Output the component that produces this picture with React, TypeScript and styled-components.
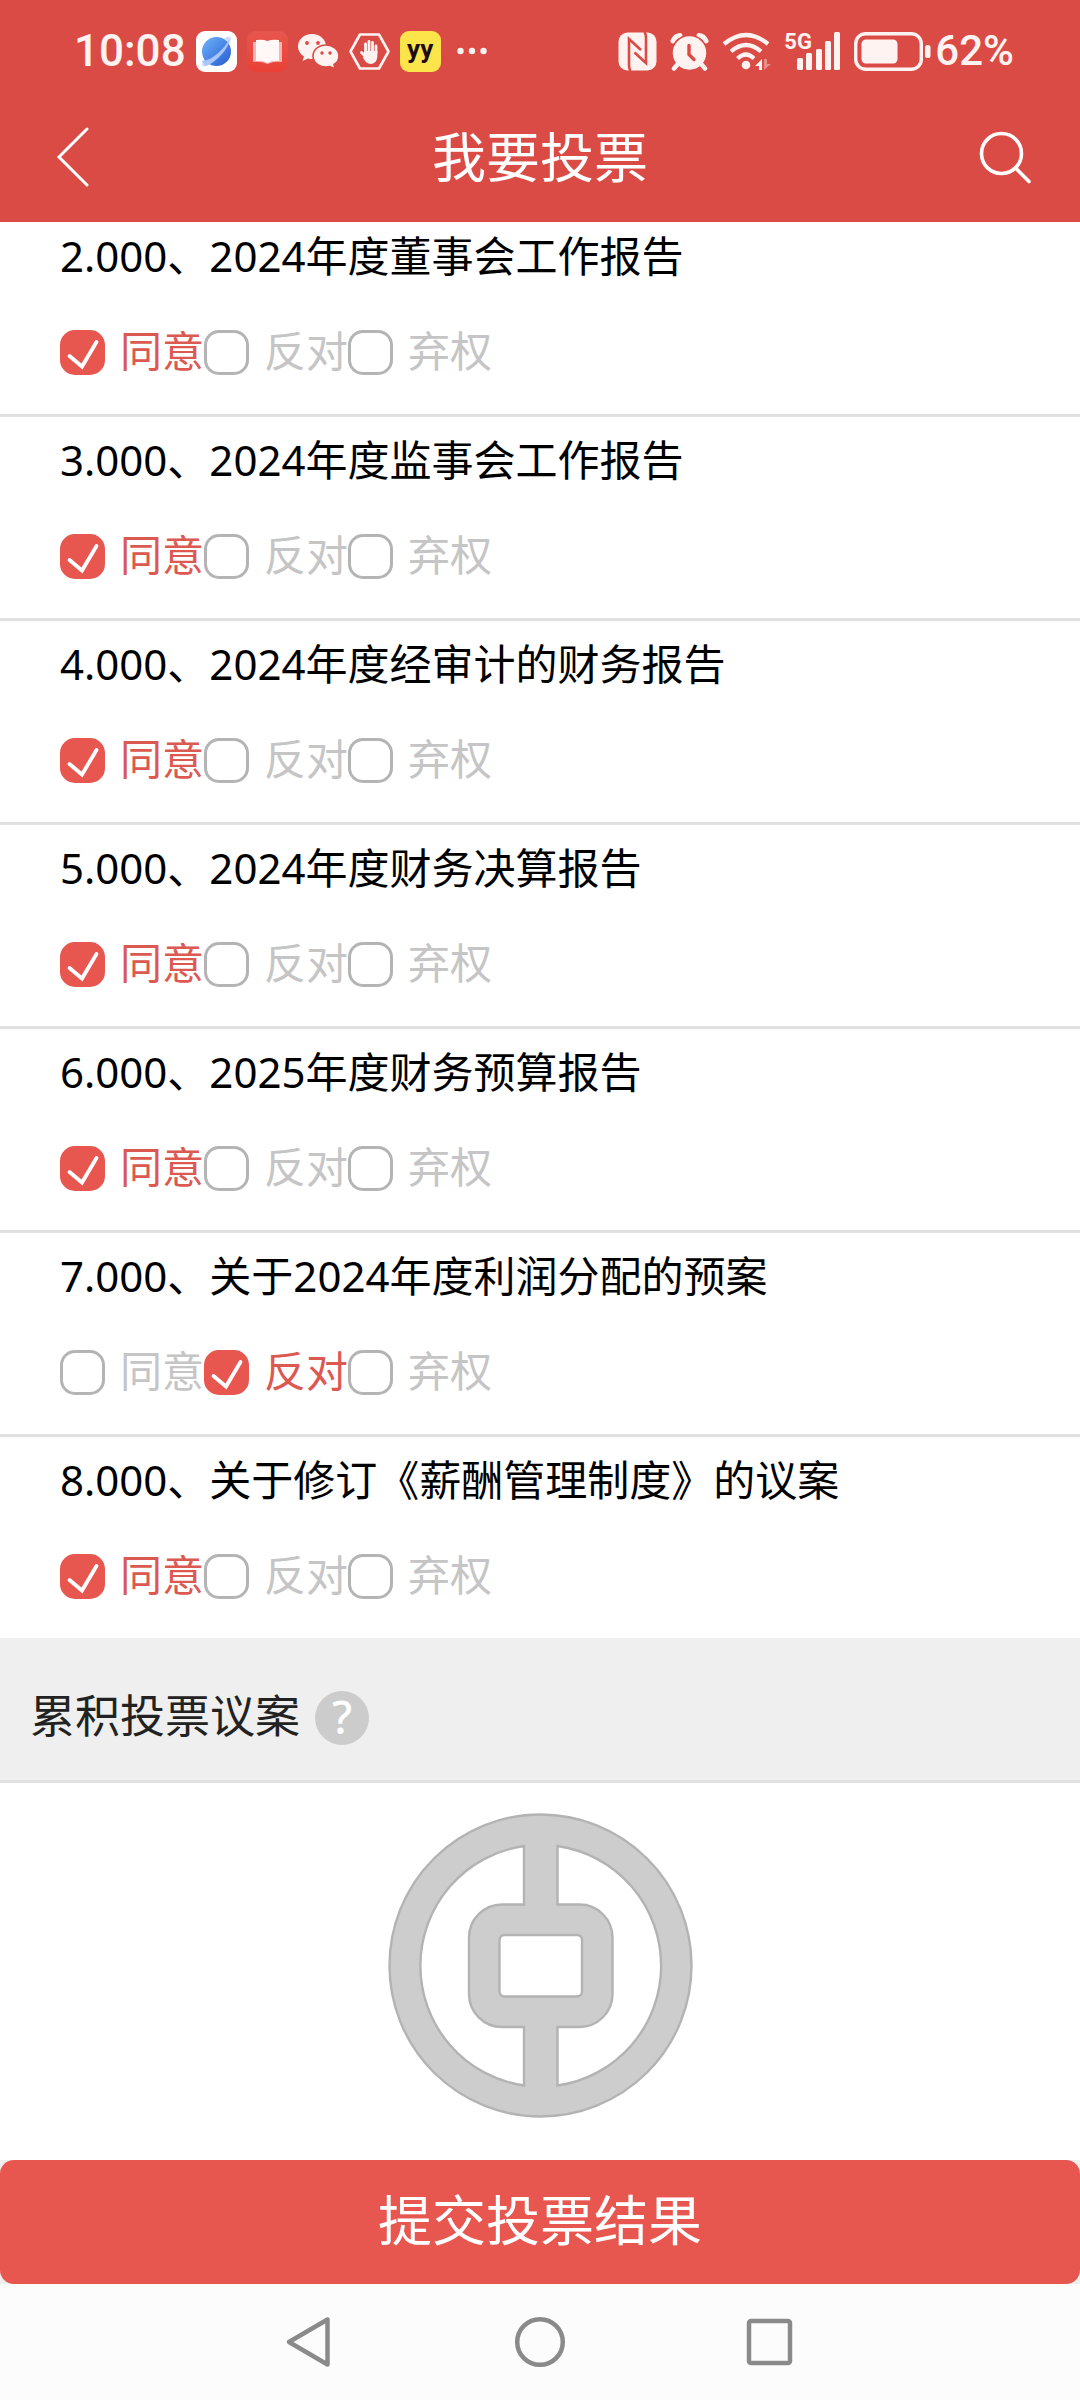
import React, { useState } from "react";
import styled, { createGlobalStyle } from "styled-components";

const GlobalStyle = createGlobalStyle`
  * { box-sizing: border-box; }
  body {
    margin: 0;
    background: #fff;
    font-family: "Noto Sans", "Noto Sans CJK SC", sans-serif;
  }
  button, input { font: inherit; margin: 0; padding: 0; border: 0; }
  button { background: none; cursor: pointer; }
  svg { display: block; flex: none; }
`;

const Page = styled.div`
  display: flex;
  flex-direction: column;
  min-height: 100vh;
  background: #fff;
`;

const Header = styled.header`
  background: #da4b45;
  color: #fff;
`;

const StatusBar = styled.div`
  display: flex;
  justify-content: space-between;
  align-items: center;
  height: 102px;
  padding: 0 66px 0 74px;
  color: #fff3f2;
  font-family: Roboto, "Noto Sans CJK SC", sans-serif;
`;

const StatusGroup = styled.div<{ $gap: number }>`
  display: flex;
  align-items: center;
  gap: ${(p) => p.$gap}px;
`;

const StatusText = styled.span<{ $size: number }>`
  font-size: ${(p) => p.$size}px;
  line-height: 52px;
  font-weight: 500;
`;

const AppBadge = styled.span`
  display: flex;
  align-items: center;
  justify-content: center;
  width: 41px;
  height: 41px;
  border-radius: 9px;
  background: #fce54b;
  color: #1d0d12;
  font-size: 26px;
  line-height: 28px;
  font-weight: 700;
  padding-bottom: 4px;
`;

const Signal = styled.span`
  position: relative;
  display: block;
`;

const SignalLabel = styled.span`
  position: absolute;
  left: 0;
  top: 0;
  font-size: 22px;
  line-height: 20px;
  font-weight: 700;
`;

const TitleBar = styled.div`
  display: grid;
  grid-template-columns: 60px 1fr 60px;
  align-items: center;
  height: 120px;
  padding: 0 44px 10px;
`;

const IconButton = styled.button`
  display: flex;
  align-items: center;
  justify-content: center;
  width: 60px;
  height: 60px;
  color: #fff;
`;

const Title = styled.h1`
  margin: 0;
  text-align: center;
  font-size: 54px;
  line-height: 72px;
  font-weight: 400;
`;

const Proposals = styled.main`
  display: flex;
  flex-direction: column;
`;

const Proposal = styled.fieldset`
  margin: 0;
  min-width: 0;
  border: 0;
  padding: 13px 60px 33px;
  border-bottom: 3px solid #e1e1e1;
  &:first-child { padding-top: 4px; }
  &:last-child { border-bottom: 0; }
`;

const ProposalTitle = styled.legend`
  float: left;
  width: 100%;
  padding: 0;
  color: #000;
  font-size: 42px;
  line-height: 60px;
`;

const Options = styled.div`
  clear: both;
  display: flex;
  padding-top: 38px;
`;

const Option = styled.label<{ $on: boolean }>`
  display: flex;
  align-items: center;
  gap: 15px;
  height: 57px;
  color: ${(p) => (p.$on ? "#dc5952" : "#c5c5c5")};
  font-size: 42px;
  line-height: 53px;
  cursor: pointer;
`;

const OptionText = styled.span`
  padding-bottom: 4px;
`;

const TickBox = styled.span`
  display: grid;
  width: 45px;
  height: 45px;
  > * { grid-area: 1 / 1; }
  > svg { pointer-events: none; }
`;

const TickInput = styled.input`
  appearance: none;
  width: 45px;
  height: 45px;
  border: 3px solid #b4b4b4;
  border-radius: 15px;
  background: #fff;
  &:checked {
    border-color: #e8574f;
    background: #e8574f;
  }
`;

const SectionHead = styled.div`
  display: flex;
  align-items: center;
  gap: 15px;
  height: 145px;
  padding: 18px 30px 0;
  background: #efefef;
  border-bottom: 3px solid #e1e1e1;
`;

const SectionTitle = styled.h2`
  margin: 0;
  padding-bottom: 4px;
  color: #222;
  font-size: 45px;
  line-height: 60px;
  font-weight: 400;
`;

const HelpButton = styled.button`
  width: 54px;
  height: 54px;
  padding-bottom: 2px;
  border-radius: 50%;
  background: #ccc;
  color: #fff;
  font-size: 45px;
  line-height: 52px;
  font-weight: 500;
  text-align: center;
`;

const Emblem = styled.div`
  display: flex;
  flex: 1;
  justify-content: center;
  padding: 30px 0 42px;
`;

const Footer = styled.div`
  background: #efefef;
`;

const Submit = styled.button`
  display: block;
  width: 100%;
  height: 124px;
  padding-bottom: 4px;
  border-radius: 14px;
  background: #e8574f;
  color: #fff;
  font-size: 54px;
  line-height: 72px;
`;

const SystemNav = styled.nav`
  display: flex;
  justify-content: center;
  gap: 172px;
  height: 116px;
  padding-top: 28px;
  background: #fcfcfc;
`;

const SystemButton = styled(IconButton)`
  color: #8a8a8a;
`;

function PlanetIcon() {
  return (
    <svg width="41" height="41" viewBox="0 0 41 41">
      <defs>
        <linearGradient id="globe" x1="0" y1="0" x2="1" y2="1">
          <stop offset="0" stopColor="#6db6fa" />
          <stop offset="1" stopColor="#2858d2" />
        </linearGradient>
      </defs>
      <rect width="41" height="41" rx="9" fill="#fff" />
      <ellipse cx="20.500" cy="20.500" rx="20" ry="5.500" fill="#cfdcfb" transform="rotate(-46 20.500 20.500)" />
      <circle cx="20.500" cy="20.500" r="14.500" fill="url(#globe)" />
      <path d="M6 30 C15 30 29 18 33 8 C36 13 20 33 9 35Z" fill="#a9c6fa" />
    </svg>
  );
}

function BookIcon() {
  return (
    <svg width="41" height="41" viewBox="0 0 41 41">
      <defs>
        <linearGradient id="cover" x1="0" y1="0" x2="0" y2="1">
          <stop offset="0" stopColor="#e8564d" />
          <stop offset="1" stopColor="#ea4036" />
        </linearGradient>
      </defs>
      <rect width="41" height="41" rx="9" fill="url(#cover)" />
      <path d="M6 11 H35 V31 Q27 30 20.500 33 Q14 30 6 31Z" fill="#f9b5b0" />
      <path d="M9 9 Q16 8 20.500 10 Q25 8 32 9 V30 Q25 29 20.500 32 Q16 29 9 30Z" fill="#fff8f7" />
    </svg>
  );
}

function ChatIcon() {
  return (
    <svg width="41" height="37" viewBox="0 0 41 37" fill="#fff3f2">
      <path d="M14 1 C6 1 0 6.500 0 13.500 C0 17.500 2 21 6 23.500 L4.500 28 L10 25.500 C21 28 28 21 28 13.500 C28 6.500 22 1 14 1Z" />
      <path
        d="M28 12 C20.500 12 15 17 15 23 C15 30 22 35.500 32 33.500 L37 36 L36 31.500 C39.500 29.500 41 26.500 41 23 C41 17 35 12 28 12Z"
        stroke="#da4b45"
        strokeWidth="1.600"
      />
      <g fill="#da4b45">
        <circle cx="9" cy="10" r="1.900" />
        <circle cx="20" cy="10" r="1.900" />
        <circle cx="24" cy="20" r="1.700" />
        <circle cx="32" cy="20" r="1.700" />
      </g>
    </svg>
  );
}

function HandIcon() {
  return (
    <svg width="41" height="41" viewBox="0 0 41 41" fill="none" stroke="#fff3f2">
      <path d="M11 3.500 H30 L39.500 20.500 L30 37.500 H11 L1.500 20.500Z" strokeWidth="2.600" strokeLinejoin="round" />
      <g strokeWidth="2.800" strokeLinecap="round">
        <path d="M16.500 22 V13 M20 21 V10.500 M23.500 21 V11.500 M27 22 V15" />
        <path d="M17 26 L12.500 21.500" />
      </g>
      <path d="M15.200 20 H28.300 V26 Q27.500 33 21.500 33 Q17 33 14 26.500Z" fill="#fff3f2" stroke="none" />
    </svg>
  );
}

function MoreIcon() {
  return (
    <svg width="41" height="41" viewBox="0 0 41 41" fill="#fff3f2">
      <circle cx="9.500" cy="20" r="3.200" />
      <circle cx="21" cy="20" r="3.200" />
      <circle cx="32.500" cy="20" r="3.200" />
    </svg>
  );
}

function NfcIcon() {
  return (
    <svg width="39" height="39" viewBox="0 0 39 39">
      <rect x="0.500" y="0.500" width="38" height="38" rx="9" fill="#fff3f2" />
      <path
        d="M12.500 39 C11 37 11 35 11 33 V7 L23 18 M26.500 0 C28 2 28 4 28 6 V31 L16.500 20.500"
        fill="none"
        stroke="#da4b45"
        strokeWidth="2.600"
      />
    </svg>
  );
}

function AlarmIcon() {
  return (
    <svg width="39" height="39" viewBox="0 0 39 39" fill="none" stroke="#fff3f2" strokeLinecap="round">
      <path d="M3 9 Q5 4 10 3.500 M36 9 Q34 4 29 3.500" strokeWidth="5" />
      <circle cx="19.500" cy="21" r="17.500" fill="#fff3f2" stroke="#da4b45" strokeWidth="1.500" />
      <path d="M7 33 L4 36.500 M32 33 L35 36.500" strokeWidth="4.500" />
      <path d="M19 13.500 V22.500 L24 27.500" stroke="#da4b45" strokeWidth="3.400" />
    </svg>
  );
}

function WifiIcon() {
  return (
    <svg width="49" height="39" viewBox="0 0 49 39" fill="none" stroke="#fff3f2" strokeWidth="4.200">
      <path d="M2 12 Q24 -6 46 12" />
      <path d="M9 19.500 Q24 6.500 39 19.500" />
      <path d="M15.500 26.500 Q24 18.500 32 26.500" />
      <circle cx="24" cy="33" r="4.300" fill="#fff3f2" stroke="none" />
      <path d="M40 27 V38 H37 V34 H33Z" fill="#fff3f2" stroke="none" />
      <path d="M42 27 V38 L49 32 H45 V27Z" fill="#ea8d88" stroke="none" />
    </svg>
  );
}

function SignalIcon() {
  return (
    <svg width="57" height="39" viewBox="0 0 57 39" fill="#fff3f2">
      <rect x="13" y="26" width="6" height="12" rx="1.500" />
      <rect x="22" y="21" width="6" height="17" rx="1.500" />
      <rect x="32" y="17" width="6" height="21" rx="1.500" />
      <rect x="41" y="9" width="6" height="29" rx="1.500" />
      <rect x="50" y="0" width="6" height="38" rx="1.500" />
    </svg>
  );
}

function BatteryIcon() {
  return (
    <svg width="77" height="39" viewBox="0 0 77 39">
      <rect x="1.700" y="1.700" width="65.600" height="35.600" rx="10" fill="none" stroke="#fff3f2" strokeWidth="3.400" />
      <rect x="7.500" y="7.500" width="36" height="24" rx="4.500" fill="#fff3f2" />
      <rect x="71" y="13" width="5.500" height="13" rx="2.500" fill="#fff3f2" />
    </svg>
  );
}

function Tick() {
  return (
    <svg width="45" height="45" viewBox="0 0 45 45" fill="none" stroke="#fff" strokeWidth="3.800" strokeLinecap="round">
      <path d="M9.500 26 L22 36.500 L36.500 12" />
    </svg>
  );
}

function BankEmblem() {
  return (
    <svg width="305" height="305" viewBox="0 0 305 305" fill="#cdcdcd" stroke="#b3b3b3" strokeWidth="2.400">
      <circle cx="152.500" cy="152.500" r="151" />
      <path
        fill="#fff"
        d="M136 33 V91.500 H114 A33 33 0 0 0 81 124.500 V181 A33 33 0 0 0 114 214 H136 V272.500 A121 121 0 0 1 136 33Z
           M169.500 33 V91.500 H191 A33 33 0 0 1 224.500 124.500 V181 A33 33 0 0 1 191 214 H169.500 V272.500 A121 121 0 0 0 169.500 33Z"
      />
      <rect x="111.500" y="122" width="82.500" height="61.500" rx="5" fill="#fff" />
    </svg>
  );
}

const choices = ["同意", "反对", "弃权"];

const proposals = [
  { id: "2.000", name: "2024年度董事会工作报告", vote: 0 },
  { id: "3.000", name: "2024年度监事会工作报告", vote: 0 },
  { id: "4.000", name: "2024年度经审计的财务报告", vote: 0 },
  { id: "5.000", name: "2024年度财务决算报告", vote: 0 },
  { id: "6.000", name: "2025年度财务预算报告", vote: 0 },
  { id: "7.000", name: "关于2024年度利润分配的预案", vote: 1 },
  { id: "8.000", name: "关于修订《薪酬管理制度》的议案", vote: 0 },
];

function ProposalRow({ id, name, vote }: { id: string; name: string; vote: number }) {
  const [selected, setSelected] = useState(vote);
  return (
    <Proposal>
      <ProposalTitle>{`${id}、${name}`}</ProposalTitle>
      <Options>
        {choices.map((choice, index) => {
          const inputId = `vote-${id}-${index}`;
          const on = selected === index;
          return (
            <Option key={choice} htmlFor={inputId} $on={on}>
              <TickBox>
                <TickInput id={inputId} type="checkbox" checked={on} onChange={() => setSelected(index)} />
                {on && <Tick />}
              </TickBox>
              <OptionText>{choice}</OptionText>
            </Option>
          );
        })}
      </Options>
    </Proposal>
  );
}

export default function App() {
  return (
    <Page lang="zh-CN">
      <GlobalStyle />
      <Header>
        <StatusBar>
          <StatusGroup $gap={10}>
            <StatusText $size={44}>10:08</StatusText>
            <PlanetIcon />
            <BookIcon />
            <ChatIcon />
            <HandIcon />
            <AppBadge>yy</AppBadge>
            <MoreIcon />
          </StatusGroup>
          <StatusGroup $gap={13}>
            <NfcIcon />
            <AlarmIcon />
            <WifiIcon />
            <Signal>
              <SignalIcon />
              <SignalLabel>5G</SignalLabel>
            </Signal>
            <StatusGroup $gap={4}>
              <BatteryIcon />
              <StatusText $size={42}>62%</StatusText>
            </StatusGroup>
          </StatusGroup>
        </StatusBar>
        <TitleBar>
          <IconButton type="button" aria-label="返回">
            <svg width="60" height="60" viewBox="0 0 60 60" fill="none" stroke="currentColor" strokeWidth="3" strokeLinecap="round">
              <path d="M43 2 L15 30 L43 58" />
            </svg>
          </IconButton>
          <Title>我要投票</Title>
          <IconButton type="button" aria-label="搜索">
            <svg width="60" height="60" viewBox="0 0 60 60" fill="none" stroke="currentColor" strokeWidth="3.600" strokeLinecap="round">
              <circle cx="25.500" cy="26.500" r="20" />
              <path d="M39.500 41 L53 54.500" />
            </svg>
          </IconButton>
        </TitleBar>
      </Header>
      <Proposals>
        {proposals.map((item) => (
          <ProposalRow key={item.id} {...item} />
        ))}
      </Proposals>
      <SectionHead>
        <SectionTitle>累积投票议案</SectionTitle>
        <HelpButton type="button">?</HelpButton>
      </SectionHead>
      <Emblem>
        <BankEmblem />
      </Emblem>
      <Footer>
        <Submit type="submit">提交投票结果</Submit>
        <SystemNav>
          <SystemButton type="button" aria-label="后退">
            <svg width="60" height="60" viewBox="0 0 60 60" fill="none" stroke="currentColor" strokeWidth="4.500" strokeLinejoin="round">
              <path d="M49.500 7.500 V52.500 L11 30Z" />
            </svg>
          </SystemButton>
          <SystemButton type="button" aria-label="主屏幕">
            <svg width="60" height="60" viewBox="0 0 60 60" fill="none" stroke="currentColor" strokeWidth="4.500">
              <circle cx="30" cy="30" r="22.800" />
            </svg>
          </SystemButton>
          <SystemButton type="button" aria-label="最近任务">
            <svg width="60" height="60" viewBox="0 0 60 60" fill="none" stroke="currentColor" strokeWidth="4.500">
              <rect x="7" y="9" width="41" height="42" rx="2" />
            </svg>
          </SystemButton>
        </SystemNav>
      </Footer>
    </Page>
  );
}
